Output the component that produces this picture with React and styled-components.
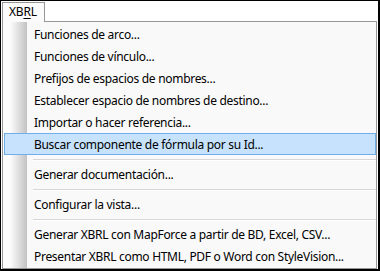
import React from 'react'
import styled, { createGlobalStyle } from 'styled-components'

const Global = createGlobalStyle`
	html, body {
		margin: 0;
		padding: 0;
		background: #ffffff;
	}
	body {
		font-family: 'Noto Sans', 'Open Sans', sans-serif;
		font-size: 12px;
		color: #000000;
	}
`

const Frame = styled('div')`
	width: 380px;
	height: 271px;
	box-sizing: border-box;
	border-style: solid;
	border-color: #000000;
	border-width: 1px 2px 2px 1px;
	background: #ffffff;
	padding: 1px 0 0 1px;
	display: flex;
	flex-direction: column;
	overflow: hidden;
`

const MenuBar = styled('div')`
	display: flex;
	height: 20px;
	position: relative;
	z-index: 1;
	margin-bottom: -1px;
`

const BarItem = styled('div')`
	box-sizing: border-box;
	height: 20px;
	padding: 0 7px 0 6px;
	border: 1px solid #979797;
	border-bottom: none;
	background: #fbfbfb;
	line-height: 18px;
	letter-spacing: -0.2px;
`

const Mnemonic = styled('span')`
	text-decoration: underline;
	text-underline-offset: 2px;
`

const Panel = styled('div')`
	box-sizing: border-box;
	width: 375px;
	height: 248px;
	border: 1px solid #979797;
	padding: 1px 0;
	display: flex;
	flex-direction: column;
	background:
		linear-gradient(to right, #fcfcfc 0px, #fcfcfc 7px, #c2c2c2 24px) no-repeat 0 0 / 24px 100%,
		#f9f9f9;
`

const Item = styled('div')`
	box-sizing: border-box;
	height: 22px;
	margin-left: 1px;
	padding-left: 29px;
	line-height: 21px;
	letter-spacing: -0.3px;
	white-space: nowrap;
	border: 1px solid ${(p) => (p.$active ? '#70aeea' : 'transparent')};
	background: ${(p) => (p.$active ? '#c6e2fc' : 'transparent')};
`

const Separator = styled('div')`
	height: 8px;
	display: flex;
	align-items: center;
	padding-left: 30px;

	&::before {
		content: '';
		flex: 1;
		height: 1px;
		background: #d7d7d7;
		box-shadow: 0 1px 0 #ffffff;
	}
`

const entries = [
	{ label: 'Funciones de arco...' },
	{ label: 'Funciones de vínculo...' },
	{ label: 'Prefijos de espacios de nombres...' },
	{ label: 'Establecer espacio de nombres de destino...' },
	{ label: 'Importar o hacer referencia...' },
	{ label: 'Buscar componente de fórmula por su Id...', active: true },
	{ sep: true },
	{ label: 'Generar documentación...' },
	{ sep: true },
	{ label: 'Configurar la vista...' },
	{ sep: true },
	{ label: 'Generar XBRL con MapForce a partir de BD, Excel, CSV...' },
	{ label: 'Presentar XBRL como HTML, PDF o Word con StyleVision...' },
]

const App = () => {
	return (
		<>
			<Global />
			<Frame>
				<MenuBar>
					<BarItem>
						XB<Mnemonic>R</Mnemonic>L
					</BarItem>
				</MenuBar>
				<Panel>
					{entries.map((e, i) =>
						e.sep ? (
							<Separator key={i} />
						) : (
							<Item key={i} $active={e.active}>
								{e.label}
							</Item>
						)
					)}
				</Panel>
			</Frame>
		</>
	)
}

export default App
